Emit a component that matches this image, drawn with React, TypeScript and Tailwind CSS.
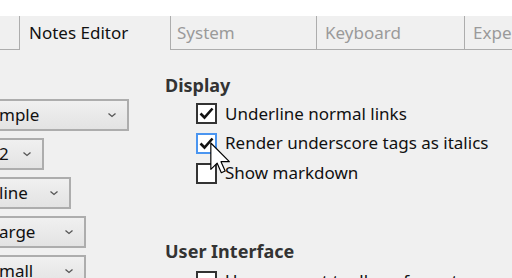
import React from 'react';

function Chevron() {
  return (
    <svg width="10" height="6" viewBox="0 0 10 6" fill="none" aria-hidden="true">
      <path d="M1.5 1.5l3.5 3 3.5-3" stroke="#555" strokeWidth="1.3" />
    </svg>
  );
}

function Dropdown({ label, width }: { label: string; width: string }) {
  return (
    <div className={`flex h-[32px] ${width} shrink-0 items-center justify-between border-2 border-l-0 border-[#adadad] bg-gradient-to-b from-[#f0f0f0] to-[#e3e3e3] pr-[10px] text-[17px] text-[#111]`}>
      <span className="-ml-[1px]">{label}</span>
      <Chevron />
    </div>
  );
}

function Checkbox({ checked, hover }: { checked?: boolean; hover?: boolean }) {
  return (
    <div className={`grid h-[21px] w-[21px] shrink-0 place-items-center border-2 bg-white ${hover ? 'border-[#4a95f0]' : 'border-[#333]'}`}>
      {checked && (
        <svg width="15" height="13" viewBox="0 0 15 13" fill="none" aria-hidden="true">
          <path d="M1.5 6.5l4 4 8-9" stroke="#111" strokeWidth="2.6" />
        </svg>
      )}
    </div>
  );
}

function Row({ label, checked, hover, h = 'h-[30px]' }: { label: string; checked?: boolean; hover?: boolean; h?: string }) {
  return (
    <div className={`flex ${h} items-center pl-[31px]`}>
      <Checkbox checked={checked} hover={hover} />
      <span className="ml-[8px] whitespace-nowrap text-[17px] text-[#111]">{label}</span>
    </div>
  );
}

export default function App() {
  return (
    <div className="relative h-[278px] w-[512px] overflow-hidden bg-white font-['Noto_Sans',sans-serif]">
      <div className="h-[16px]" />
      {/* tab strip */}
      <div className="flex h-[34px] bg-[#f0f0f0] text-[17px]">
        <div className="w-[20px] shrink-0 border-r border-b border-[#adadad]" />
        <div className="flex w-[150px] shrink-0 items-center pl-[9px] text-[#111]">Notes Editor</div>
        <div className="flex w-[146px] shrink-0 items-center border-l border-b border-[#adadad] pl-[6px] text-[#9a9a9a]">System</div>
        <div className="flex w-[148px] shrink-0 items-center border-l border-b border-[#adadad] pl-[8px] text-[#9a9a9a]">Keyboard</div>
        <div className="flex flex-1 items-center whitespace-nowrap border-l border-b border-[#adadad] pl-[8px] text-[#9a9a9a]">Expert</div>
      </div>

      <div className="flex h-[228px] bg-[#f0f0f0]">
        {/* left column, clipped by the window */}
        <div className="flex w-[165px] shrink-0 flex-col gap-[7px] overflow-hidden pt-[49px]">
          <Dropdown label="mple" width="w-[129px]" />
          <Dropdown label="2" width="w-[44px]" />
          <Dropdown label="line" width="w-[71px]" />
          <Dropdown label="arge" width="w-[86px]" />
          <Dropdown label="mall" width="w-[86px]" />
        </div>

        <div className="flex flex-1 flex-col pt-[23px]">
          <h3 className="text-[18px] font-bold leading-[24px] text-[#333]">Display</h3>
          <div className="mt-[2px]">
            <Row label="Underline normal links" checked h="h-[29px]" />
            <Row label="Render underscore tags as italics" checked hover />
            <Row label="Show markdown" />
          </div>
          <h3 className="mt-[51px] text-[18px] font-bold leading-[24px] text-[#333]">User Interface</h3>
          <div className="mt-[3px]">
            <Row label="Use compact toolbars for notes" />
          </div>
        </div>
      </div>

      {/* mouse pointer */}
      <svg className="absolute left-[210px] top-[142px]" width="20" height="32" viewBox="0 0 12 19" aria-hidden="true">
        <path d="M0.5 0.5V16.3L4.3 12.6L6.8 18.3L9.1 17.3L6.6 11.7H11.6Z" fill="#fff" stroke="#000" strokeWidth="0.7" strokeLinejoin="round" />
      </svg>
    </div>
  );
}
